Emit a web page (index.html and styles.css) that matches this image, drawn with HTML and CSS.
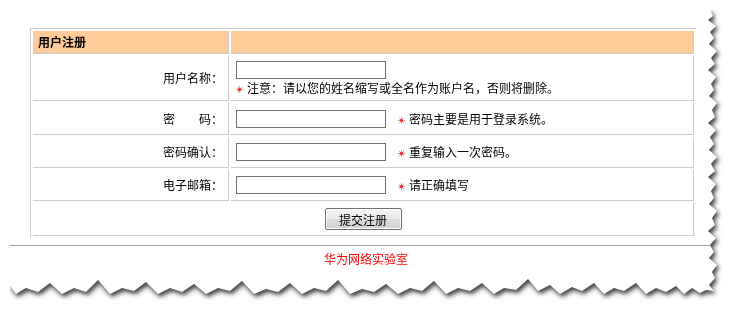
FILE: index.html
```html
<!DOCTYPE html>
<html lang="zh-CN">
<head>
    <meta charset="UTF-8">
    <title>用户注册</title>
    <link rel="stylesheet" href="styles.css">
</head>
<body>
    <div class="sheet">
        <div class="paper">
            <table class="reg">
                <tr class="head">
                    <td class="label-col">用户注册</td>
                    <td></td>
                </tr>
                <tr class="r1">
                    <td class="label">用户名称：</td>
                    <td class="field">
                        <input type="text" class="box block">
                        <div class="note"><svg class="star" width="7" height="7" viewBox="0 0 7 7"><path d="M3.5 0v7M0 3.5h7M1 1l5 5M6 1l-5 5" stroke="#f9a04a" stroke-width="1"/><circle cx="3.5" cy="3.5" r="1.7" fill="#e8305a"/></svg>注意：请以您的姓名缩写或全名作为账户名，否则将删除。</div>
                    </td>
                </tr>
                <tr class="r2">
                    <td class="label">密　　码：</td>
                    <td class="field">
                        <input type="password" class="box"><span class="tip"><svg class="star" width="7" height="7" viewBox="0 0 7 7"><path d="M3.5 0v7M0 3.5h7M1 1l5 5M6 1l-5 5" stroke="#f9a04a" stroke-width="1"/><circle cx="3.5" cy="3.5" r="1.7" fill="#e8305a"/></svg>密码主要是用于登录系统。</span>
                    </td>
                </tr>
                <tr class="r3">
                    <td class="label">密码确认：</td>
                    <td class="field">
                        <input type="password" class="box"><span class="tip"><svg class="star" width="7" height="7" viewBox="0 0 7 7"><path d="M3.5 0v7M0 3.5h7M1 1l5 5M6 1l-5 5" stroke="#f9a04a" stroke-width="1"/><circle cx="3.5" cy="3.5" r="1.7" fill="#e8305a"/></svg>重复输入一次密码。</span>
                    </td>
                </tr>
                <tr class="r4">
                    <td class="label">电子邮箱：</td>
                    <td class="field">
                        <input type="text" class="box"><span class="tip"><svg class="star" width="7" height="7" viewBox="0 0 7 7"><path d="M3.5 0v7M0 3.5h7M1 1l5 5M6 1l-5 5" stroke="#f9a04a" stroke-width="1"/><circle cx="3.5" cy="3.5" r="1.7" fill="#e8305a"/></svg>请正确填写</span>
                    </td>
                </tr>
                <tr class="r5">
                    <td colspan="2" class="submit-cell"><button type="submit">提交注册</button></td>
                </tr>
            </table>
            <div class="footer">华为网络实验室</div>
        </div>
    </div>
</body>
</html>
```

FILE: styles.css
```css
body {
    margin: 10px;
    background-color: #FFFFFF;
    font-family: "Noto Sans CJK SC", "DejaVu Sans", sans-serif;
    font-size: 12px;
    color: #000;
}
.sheet {
    width: 712px;
    filter: drop-shadow(0 0 3px rgba(0, 0, 0, 0.2)) drop-shadow(2px 3px 2px rgba(0, 0, 0, 0.7));
}
.paper {
    background-color: #FFFFFF;
    height: 290px;
    padding-top: 18px;
    box-sizing: border-box;
    clip-path: polygon(0 0, 700px 0, 703px 6px, 698px 10px, 706px 16px, 700px 22px, 704px 28px, 699px 34px, 707px 41px, 701px 48px, 705px 54px, 698px 60px, 706px 67px, 701px 74px, 704px 80px, 699px 86px, 707px 93px, 702px 100px, 705px 107px, 698px 113px, 706px 120px, 700px 127px, 704px 134px, 699px 140px, 707px 147px, 701px 154px, 705px 161px, 698px 167px, 706px 174px, 701px 181px, 704px 188px, 699px 194px, 707px 201px, 702px 208px, 705px 215px, 698px 221px, 706px 228px, 700px 235px, 704px 242px, 699px 248px, 707px 255px, 702px 262px, 705px 268px, 699px 275px, 704px 281px, 696px 280px, 690px 283px, 682px 278px, 674px 284px, 666px 276px, 656px 282px, 646px 278px, 636px 284px, 626px 273px, 614px 281px, 604px 278px, 594px 284px, 584px 273px, 572px 281px, 562px 277px, 550px 284px, 540px 275px, 528px 281px, 518px 269px, 506px 280px, 494px 278px, 484px 284px, 472px 273px, 460px 281px, 448px 278px, 436px 284px, 424px 271px, 412px 281px, 400px 278px, 388px 284px, 376px 274px, 364px 282px, 352px 279px, 340px 284px, 328px 270px, 316px 281px, 304px 278px, 292px 284px, 280px 273px, 268px 282px, 256px 279px, 244px 284px, 232px 271px, 220px 281px, 208px 278px, 196px 284px, 184px 274px, 172px 282px, 160px 278px, 148px 284px, 136px 272px, 124px 281px, 112px 278px, 100px 284px, 88px 270px, 76px 282px, 64px 278px, 52px 284px, 40px 273px, 28px 282px, 16px 278px, 6px 284px, 0 276px);
}
.reg {
    margin-left: 20px;
    width: 666px;
    border-collapse: separate;
    border-spacing: 2px;
    border-top: 1px solid #CCCCCC;
    border-left: 1px solid #CCCCCC;
}
.reg td {
    padding: 0 5px;
    border-right: 1px solid #CCCCCC;
    border-bottom: 1px solid #CCCCCC;
    line-height: 14px;
    vertical-align: middle;
}
.head td {
    background-color: #FFCC99;
    height: 22px;
    font-weight: bold;
}
.label-col {
    width: 185px;
}
.label {
    text-align: right;
}
.r1 td { height: 44px; }
.r2 td { height: 31px; }
.r3 td { height: 30px; }
.r4 td { height: 30px; }
.r5 td { height: 32px; }
.box {
    width: 150px;
    height: 18px;
    box-sizing: border-box;
    border: 1px solid #707070;
    padding: 0 2px;
    margin: 0;
    vertical-align: middle;
    font-size: 12px;
}
.block {
    display: block;
    margin-bottom: 2px;
}
.star {
    margin-right: 4px;
    vertical-align: 0;
}
.tip {
    margin-left: 12px;
    vertical-align: middle;
}
.submit-cell {
    text-align: center;
}
button {
    width: 77px;
    height: 22px;
    padding: 0;
    font-family: "Noto Sans CJK SC", "DejaVu Sans", sans-serif;
    font-size: 12px;
    color: #000;
    border: 1px solid #707070;
    border-radius: 2px;
    background: linear-gradient(#F4F4F4, #EAEAEA 50%, #DCDCDC 50%, #D2D2D2);
    box-shadow: inset 0 0 0 1px #FCFCFC;
    vertical-align: middle;
}
.footer {
    margin-top: 7px;
    border-top: 1px solid #A0A0A0;
    padding-top: 3px;
    line-height: 20px;
    text-align: center;
    color: #FF0000;
}
```
